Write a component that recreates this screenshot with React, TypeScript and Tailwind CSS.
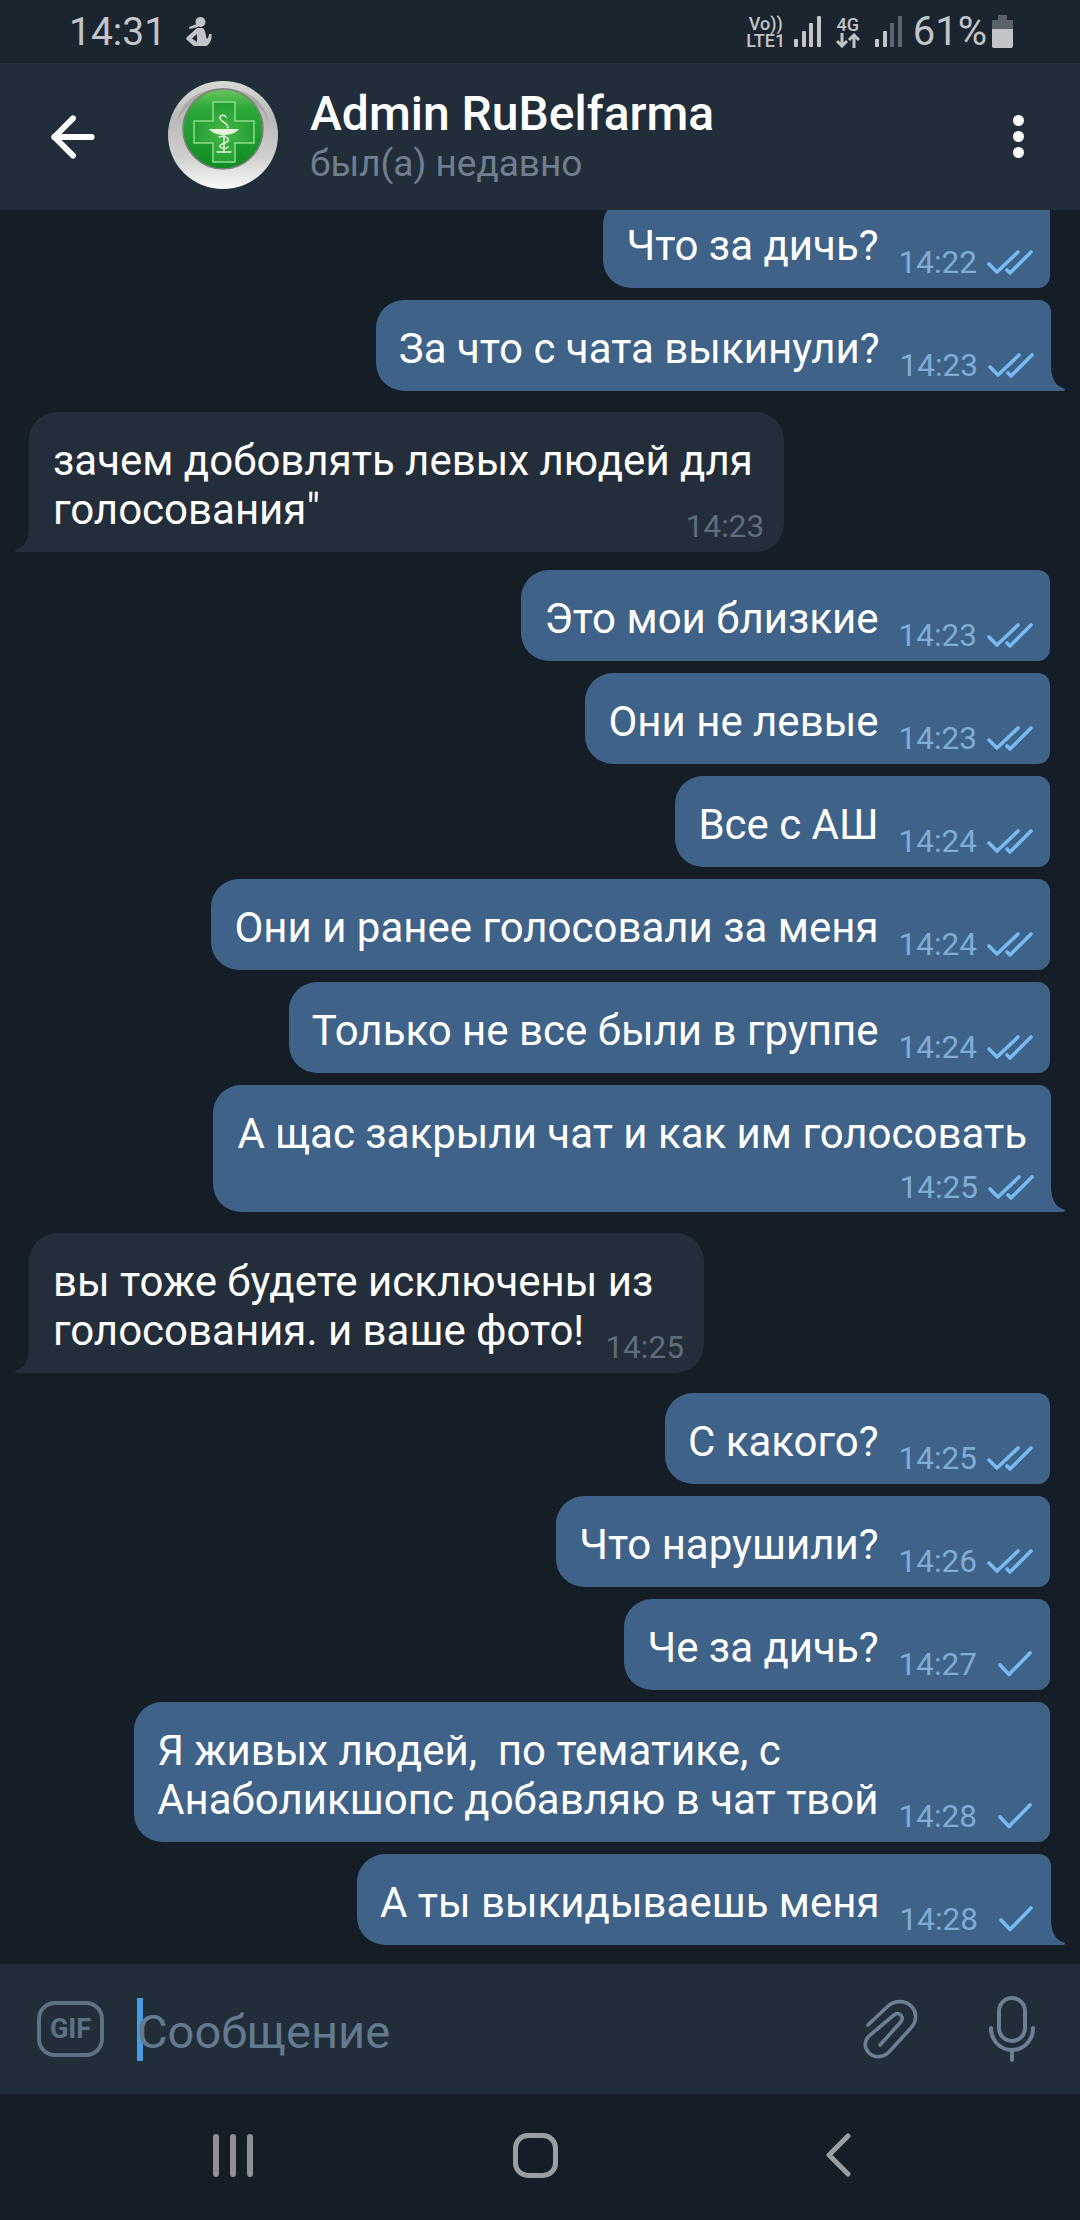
import { ArrowLeft } from "lucide-react"

type Msg = {
  lines: string[]
  time: string
  out?: boolean
  tail?: boolean
  read?: boolean
  below?: boolean
  mt?: string
  metaMl?: string
}

const messages: Msg[] = [
  { lines: ["Что за дичь?"], time: "14:22", out: true, read: true },
  { lines: ["За что с чата выкинули?"], time: "14:23", out: true, read: true, tail: true },
  { lines: ["зачем добовлять левых людей для", "голосования\""], time: "14:23", tail: true, mt: "mt-[21px]", metaMl: "-ml-[67px]" },
  { lines: ["Это мои близкие"], time: "14:23", out: true, read: true, mt: "mt-[18px]" },
  { lines: ["Они не левые"], time: "14:23", out: true, read: true },
  { lines: ["Все с АШ"], time: "14:24", out: true, read: true },
  { lines: ["Они и ранее голосовали за меня"], time: "14:24", out: true, read: true },
  { lines: ["Только не все были в группе"], time: "14:24", out: true, read: true },
  { lines: ["А щас закрыли чат и как им голосовать"], time: "14:25", out: true, read: true, tail: true, below: true },
  { lines: ["вы тоже будете исключены из", "голосования. и ваше фото!"], time: "14:25", tail: true, mt: "mt-[21px]", metaMl: "-ml-[48px]" },
  { lines: ["С какого?"], time: "14:25", out: true, read: true, mt: "mt-[20px]" },
  { lines: ["Что нарушили?"], time: "14:26", out: true, read: true },
  { lines: ["Че за дичь?"], time: "14:27", out: true },
  { lines: ["Я живых людей,  по тематике, с", "Анаболикшопс добавляю в чат твой"], time: "14:28", out: true },
  { lines: ["А ты выкидываешь меня"], time: "14:28", out: true, tail: true },
]

function Checks({ read }: { read?: boolean }) {
  return (
    <svg className="-mt-[2px]" width="46" height="26" viewBox="0 0 46 26" fill="none" stroke="#78baf4" strokeWidth="3.6" strokeLinecap="round" strokeLinejoin="round">
      {read ? (
        <>
          <path d="M2 15 L10 23 L31 3" />
          <path d="M20 21 L23 24 L44 3" />
        </>
      ) : (
        <path d="M13 14 L22 23.5 L43 2" />
      )}
    </svg>
  )
}

function OutTail() {
  return (
    <svg className="absolute right-[-15px] bottom-0" width="17" height="26" viewBox="0 0 17 26">
      <path d="M0 0 H2 C2 12 6 21 15 23.5 C16.5 24 16 26 14 26 H0 Z" fill="#3f6288" />
    </svg>
  )
}

function InTail() {
  return (
    <svg className="absolute left-[-15px] bottom-0" width="17" height="26" viewBox="0 0 17 26">
      <path d="M17 0 H15 C15 12 11 21 2 23.5 C0.5 24 1 26 3 26 H17 Z" fill="#232e3a" />
    </svg>
  )
}

function Bubble({ m }: { m: Msg }) {
  const text = (
    <div className="text-[42px] leading-[49px] text-white whitespace-pre">
      {m.lines.map((l) => (
        <div key={l}>{l}</div>
      ))}
    </div>
  )
  const meta = (
    <div className="flex h-[32px] items-center gap-[10px]">
      <span className={m.out ? "text-[31.5px] leading-[32px] text-[#7fadd6]" : "text-[31.5px] leading-[32px] text-[#5f6d7b]"}>{m.time}</span>
      {m.out && <Checks read={m.read} />}
    </div>
  )
  if (m.below) {
    return (
      <div className={`relative mr-[29px] self-end rounded-l-[28px] rounded-tr-[12px] bg-[#3f6288] pt-[24px] pr-[24px] pb-[8px] pl-[24px] ${m.mt ?? "mt-[12px]"}`}>
        {text}
        <div className="mt-[14px] -mr-[7px] flex justify-end">{meta}</div>
        <OutTail />
      </div>
    )
  }
  if (!m.out) {
    return (
      <div className={`relative ml-[29px] flex items-end self-start rounded-[28px] rounded-bl-none bg-[#232e3a] pt-[24px] pr-[20px] pb-[9px] pl-[24px] ${m.mt ?? "mt-[12px]"}`}>
        <div className="mb-[9px]">{text}</div>
        <div className={m.metaMl}>{meta}</div>
        <InTail />
      </div>
    )
  }
  return (
    <div className={`relative flex items-end self-end rounded-l-[28px] bg-[#3f6288] pt-[24px] pr-[17px] pb-[9px] pl-[23px] ${m.tail ? "mr-[29px] rounded-tr-[12px]" : "mr-[30px] rounded-r-[12px]"} ${m.mt ?? "mt-[12px]"}`}>
      <div className="mb-[9px]">{text}</div>
      <div className="ml-[20px]">{meta}</div>
      {m.tail && <OutTail />}
    </div>
  )
}

function Avatar() {
  return (
    <svg width="110" height="108" viewBox="0 0 110 108">
      <defs>
        <linearGradient id="ring" x1="0" y1="0" x2="0" y2="1">
          <stop offset="0" stopColor="#d8d8d5" />
          <stop offset="0.35" stopColor="#b9bab8" />
          <stop offset="0.7" stopColor="#cfcfcd" />
          <stop offset="1" stopColor="#fafaf8" />
        </linearGradient>
        <linearGradient id="disc" x1="0" y1="0" x2="0" y2="1">
          <stop offset="0" stopColor="#6cc65e" />
          <stop offset="0.25" stopColor="#2aa838" />
          <stop offset="1" stopColor="#128a26" />
        </linearGradient>
        <radialGradient id="cross" cx="0.5" cy="0.5" r="0.6">
          <stop offset="0" stopColor="#45b848" />
          <stop offset="1" stopColor="#1e9a30" />
        </radialGradient>
      </defs>
      <ellipse cx="55" cy="54" rx="55" ry="54" fill="url(#ring)" />
      <path d="M9 42 C13 20 30 8 55 7 C80 8 97 20 101 42 C96 26 78 14 55 14 C32 14 14 26 9 42 Z" fill="#8f9290" opacity="0.55" />
      <circle cx="55" cy="48" r="40" fill="url(#disc)" stroke="#7d7f7c" strokeWidth="1.5" />
      <path d="M45 21 H67 V40 H86 V62 H67 V81 H45 V62 H26 V40 H45 Z" fill="url(#cross)" stroke="#8fdc8a" strokeWidth="1.5" />
      <g fill="none" stroke="#e6f3da" strokeWidth="1.5" strokeLinecap="round">
        <path d="M56 50 V70" />
        <path d="M58 36 C56 33 52 34 52 37 C52 41 60 41 60 47" />
        <path d="M51 56 C56 54 62 57 60 60 C58 63 52 62 52 65 C52 68 58 68 60 66" />
        <path d="M49 71 H63" />
      </g>
      <path d="M41 48 H71 C69 51 63 54 56 54 C49 54 43 51 41 48 Z" fill="#e6f3da" />
    </svg>
  )
}

function StatusIcons() {
  return (
    <div className="flex items-center text-[#c2c4c8]">
      <div className="flex w-[40px] flex-col items-center font-medium">
        <span className="text-[18px] leading-[17px]">Vo))</span>
        <span className="text-[18px] leading-[17px]">LTE1</span>
      </div>
      <svg className="ml-[8px]" width="27" height="31" viewBox="0 0 27 31" fill="#c2c4c8">
        <rect x="0" y="23" width="4" height="8" rx="1" />
        <rect x="8" y="15" width="4" height="16" rx="1" />
        <rect x="15" y="7" width="4" height="24" rx="1" />
        <rect x="23" y="0" width="4" height="31" rx="1" />
      </svg>
      <div className="ml-[15px] flex w-[24px] flex-col items-center font-medium">
        <span className="text-[18px] leading-[17px]">4G</span>
        <svg width="24" height="15" viewBox="0 0 24 15" fill="none" stroke="#c2c4c8" strokeWidth="3">
          <path d="M6 0 V13 M1 8 L6 13 L11 8" />
          <path d="M18 15 V2 M13 7 L18 2 L23 7" />
        </svg>
      </div>
      <svg className="ml-[15px]" width="27" height="31" viewBox="0 0 27 31">
        <rect x="0" y="23" width="4" height="8" rx="1" fill="#c2c4c8" />
        <rect x="8" y="15" width="4" height="16" rx="1" fill="#c2c4c8" />
        <rect x="15" y="7" width="4" height="24" rx="1" fill="#5d6670" />
        <rect x="23" y="0" width="4" height="31" rx="1" fill="#5d6670" />
      </svg>
      <span className="ml-[11px] text-[40px] leading-[40px]">61%</span>
      <svg className="ml-[5px]" width="21" height="33" viewBox="0 0 21 33">
        <path d="M6 0 H15 V5 H20 Q21 5 21 6 V14 H0 V6 Q0 5 1 5 H6 Z" fill="#5b6069" />
        <path d="M0 14 H21 V31 Q21 33 19 33 H2 Q0 33 0 31 Z" fill="#c2c4c8" />
      </svg>
    </div>
  )
}

export default function App() {
  return (
    <main className="flex h-[2220px] w-[1080px] flex-col overflow-hidden bg-[#151d26] font-['Roboto',sans-serif]">
      {/* status bar */}
      <div className="flex h-[63px] shrink-0 items-center justify-between bg-[#1b252f] pr-[67px] pl-[69px]">
        <div className="flex items-center gap-[20px]">
          <span className="text-[39px] leading-[40px] text-[#c2c4c8]">14:31</span>
          <svg width="26" height="30" viewBox="0 0 26 30" fill="#c2c4c8">
            <circle cx="14.5" cy="5" r="5" />
            <path d="M11 7 L3 10 L3.5 12 L12 10 Z" />
            <path d="M11 11 L1 20 C0 21 0 22 1 23 L8 29 H21 C24 26 26 23 25.5 17 L23 17 C23 20 22 21 20.5 22 C20 17 19 13 17 11 Z" />
            <path d="M11 17 L6 21.5 L11 25 Z" fill="#1b252f" />
          </svg>
        </div>
        <StatusIcons />
      </div>

      {/* header */}
      <header className="flex h-[147px] shrink-0 items-center bg-[#222d3a]">
        <ArrowLeft className="ml-[41px] text-white" size={64} strokeWidth={2.2} />
        <div className="ml-[63px] -mt-[3px]">
          <Avatar />
        </div>
        <div className="ml-[32px] flex flex-1 flex-col pt-[2px]">
          <span className="text-[48px] leading-[52px] font-medium text-white">Admin RuBelfarma</span>
          <span className="mt-[1px] text-[37px] leading-[46px] text-[#6f7f8f]">был(а) недавно</span>
        </div>
        <div className="mr-[56px] flex flex-col gap-[5px]">
          <div className="h-[11px] w-[11px] rounded-full bg-white" />
          <div className="h-[11px] w-[11px] rounded-full bg-white" />
          <div className="h-[11px] w-[11px] rounded-full bg-white" />
        </div>
      </header>

      {/* messages */}
      <div className="flex min-h-0 flex-1 flex-col justify-end overflow-hidden pb-[19px]">
        {messages.map((m, i) => (
          <Bubble key={i} m={m} />
        ))}
      </div>

      {/* input */}
      <div className="flex h-[130px] shrink-0 items-center bg-[#222d3a]">
        <div className="ml-[37px] flex h-[56px] w-[67px] items-center justify-center rounded-[18px] border-[4px] border-[#5f7185] text-[27px] font-bold text-[#5f7185]">
          GIF
        </div>
        <div className="ml-[33px] h-[63px] w-[6px] bg-[#4a9ae0]" />
        <span className="-ml-[6px] flex-1 pt-[5px] text-[47px] leading-[52px] text-[#647a91]">Сообщение</span>
        <svg className="mr-[70px]" width="56" height="62" viewBox="-2 -2 56 62" fill="none" stroke="#6d7f92" strokeWidth="3.6" strokeLinecap="round">
          <path d="M4 25 L24 6 C31 0 42 0 48 7 C54 14 52 23 46 29 L25 52 C19 58 10 58 5 53 C0 48 0 41 5 36 L30 15 C33 12 37 14 38 17 C39 20 37 22 35 24 L16 45" />
        </svg>
        <svg className="mr-[44px]" width="48" height="66" viewBox="0 0 48 66" fill="none" stroke="#6d7f92" strokeWidth="4" strokeLinecap="round">
          <rect x="11" y="2" width="26" height="43" rx="13" />
          <path d="M3 32 C3 44 12 54 24 54 C36 54 45 44 45 32" />
          <path d="M24 54 V64" />
        </svg>
      </div>

      {/* nav bar */}
      <nav className="flex h-[126px] shrink-0 items-center bg-[#151d26] pb-[4px]">
        <div className="ml-[213px] flex gap-[11px]">
          <div className="h-[43px] w-[6px] rounded-full bg-[#8e9196]" />
          <div className="h-[43px] w-[6px] rounded-full bg-[#8e9196]" />
          <div className="h-[43px] w-[6px] rounded-full bg-[#8e9196]" />
        </div>
        <div className="ml-[260px] h-[45px] w-[45px] rounded-[15px] border-[5px] border-[#9b9ea2]" />
        <svg className="ml-[268px]" width="25" height="44" viewBox="0 0 25 44" fill="none" stroke="#9b9ea2" strokeWidth="5" strokeLinecap="round" strokeLinejoin="round">
          <path d="M22 3 L3 22 L22 41" />
        </svg>
      </nav>
    </main>
  )
}
